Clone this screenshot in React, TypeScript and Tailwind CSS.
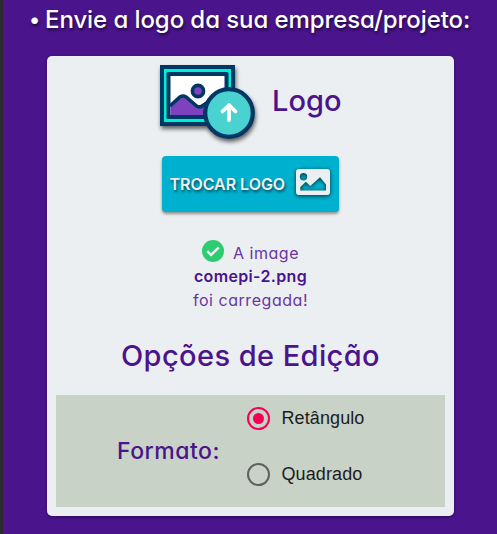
import { useState } from "react";

const heading =
  "font-[Inter,'Open_Sans',sans-serif] [font-feature-settings:'cv11'] whitespace-nowrap";

function UploadIcon() {
  return (
    <svg width="104" height="84" viewBox="0 0 104 84" className="shrink-0 drop-shadow-[1px_3px_2px_rgba(0,0,0,0.6)]">
      <rect x="5" y="4" width="75" height="61" fill="#003764" />
      <rect x="9" y="8" width="67" height="53" fill="#00efd1" />
      <rect x="11.5" y="11" width="62" height="47" rx="1.5" fill="#003764" />
      <rect x="15.5" y="15" width="54" height="39" fill="#fff" />
      <path d="M15.5 45 L28 35.5 L44 46 L56 36 L69 44 V54 H15.5Z" fill="#7e42c1" />
      <path d="M15 45 L25 36 Q28 34 31 36 L41 44.5 Q44 47 47 45 L60 37" fill="none" stroke="#003764" strokeWidth="3.6" />
      <circle cx="43" cy="30" r="5.6" fill="#7e42c1" stroke="#003764" strokeWidth="3.6" />
      <circle cx="74" cy="52" r="23.8" fill="#49d2cf" stroke="#003764" strokeWidth="4.2" />
      <path d="M74 59V45M67.5 50.5L74 44L80.5 50.5" fill="none" stroke="#fff" strokeWidth="3.8" strokeLinecap="round" strokeLinejoin="round" />
    </svg>
  );
}

function PictureIcon() {
  return (
    <svg width="36" height="28" viewBox="0 0 36 28" className="shrink-0 drop-shadow-[0_1px_2px_rgba(0,0,0,0.75)]">
      <path
        fillRule="evenodd"
        fill="#eceff1"
        d="M4 1H32Q35 1 35 4V24Q35 27 32 27H4Q1 27 1 24V4Q1 1 4 1ZM8.5 5A3.7 3.7 0 1 0 8.5 12.4A3.7 3.7 0 1 0 8.5 5ZM5.3 22.5H31V16.5L25 9.2L15.3 18L10.8 13.8L5.3 19Z"
      />
    </svg>
  );
}

function Radio({ label, checked, onSelect }: { label: string; checked: boolean; onSelect: () => void }) {
  return (
    <button type="button" role="radio" aria-checked={checked} onClick={onSelect} className="flex h-14 items-center pb-[10px]">
      <span
        className={`flex size-[23px] items-center justify-center rounded-full border-2 ${
          checked ? "border-[#f50057]" : "border-[#5d625f]"
        }`}
      >
        {checked && <span className="size-[11px] rounded-full bg-[#f50057]" />}
      </span>
      <span className="ml-3 font-['Liberation_Sans',Arial,sans-serif] text-[18px] leading-6 tracking-[0.1px] text-[#1b1d1c]">
        {label}
      </span>
    </button>
  );
}

export default function App() {
  const [format, setFormat] = useState("Retângulo");
  return (
    <main className="h-[534px] w-[497px] overflow-hidden border-l-3 border-[#2b2b2b] bg-[#4a148c] text-[#4a148c]">
      <h2 className={`${heading} flex h-14 pt-[3px] pl-[26px] text-[24px] leading-[34px] font-medium tracking-[-0.08px] text-white [text-shadow:1px_2px_3px_rgba(0,0,0,0.6)]`}>
        <span className="w-4 text-[21px]">•</span>
        <span>Envie a logo da sua empresa/projeto:</span>
      </h2>
      <section className="ml-11 flex h-[460px] w-[407px] flex-col items-center rounded-[5px] bg-[#eceff1] shadow-[0_1px_3px_rgba(0,0,0,0.4)]">
        <div className="flex h-[100px] w-full items-start pt-[5px] pl-[108px]">
          <UploadIcon />
          <h3 className={`${heading} mt-5 ml-[13px] text-[29px] leading-10 font-medium`}>Logo</h3>
        </div>
        <button
          type="button"
          className="flex h-14 w-[177px] shrink-0 items-center justify-between rounded bg-[#00b1cf] pr-2 pl-[7.5px] text-[#eceff1] shadow-[0_2px_3px_rgba(0,0,0,0.4)]"
        >
          <span className={`${heading} text-[16px] font-semibold tracking-[-0.03px] [text-shadow:1px_2px_3px_rgba(0,0,0,0.6)]`}>
            TROCAR LOGO
          </span>
          <span className="-mt-1">
            <PictureIcon />
          </span>
        </button>
        <div className={`${heading} mt-[30px] flex flex-col items-center text-[16px] leading-[23.4px] tracking-[0.55px] text-[#6936a0]`}>
          <div className="flex items-center">
            <svg width="22" height="22" viewBox="0 0 22 22" className="-mt-[6px] mr-[9px]">
              <circle cx="11" cy="11" r="11" fill="#2ecc71" />
              <path d="M5.3 11.2L9 15L16.8 7.3" fill="none" stroke="#eceff1" strokeWidth="2.5" />
            </svg>
            <span>A image</span>
          </div>
          <strong className="font-semibold tracking-[0.35px] text-[#4a148c]">comepi-2.png</strong>
          <span>foi carregada!</span>
        </div>
        <h3 className={`${heading} mt-[21px] text-[29px] leading-[46px] font-medium tracking-[0.42px]`}>Opções de Edição</h3>
        <div className="mt-auto mb-[9px] flex h-[112px] w-[389px] shrink-0 bg-[#c9d2c7]">
          <h4 className={`${heading} w-[190.5px] pl-[61px] text-[23px] leading-[113px] font-medium tracking-[0.5px]`}>Formato:</h4>
          <div role="radiogroup" aria-label="Formato">
            <Radio label="Retângulo" checked={format === "Retângulo"} onSelect={() => setFormat("Retângulo")} />
            <Radio label="Quadrado" checked={format === "Quadrado"} onSelect={() => setFormat("Quadrado")} />
          </div>
        </div>
      </section>
    </main>
  );
}
